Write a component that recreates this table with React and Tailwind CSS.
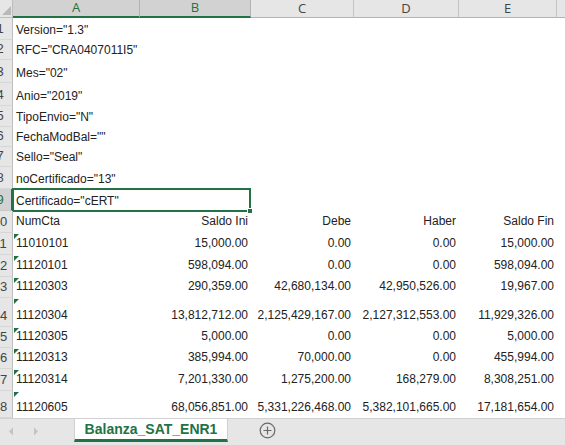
import React from "react"

// anchos de columna (px) y alto de filas
const COLS = [
  { key: "A", w: "w-[127px]", sel: true },
  { key: "B", w: "w-[111px]", sel: true },
  { key: "C", w: "w-[103px]" },
  { key: "D", w: "w-[105px]" },
  { key: "E", w: "w-[98px]" },
]

const HEAD = [
  { n: 1, h: "h-[22px]", pb: "pb-[3px]", a: 'Version="1.3"' },
  { n: 2, h: "h-[20px]", pb: "pb-[3px]", a: 'RFC="CRA0407011I5"' },
  { n: 3, h: "h-[23px]", pb: "pb-[3px]", a: 'Mes="02"' },
  { n: 4, h: "h-[23px]", pb: "pb-[3px]", a: 'Anio="2019"' },
  { n: 5, h: "h-[21px]", pb: "pb-[3px]", a: 'TipoEnvio="N"' },
  { n: 6, h: "h-[20px]", pb: "pb-[3px]", a: 'FechaModBal=""' },
  { n: 7, h: "h-[20px]", pb: "pb-[3px]", a: 'Sello="Seal"' },
  { n: 8, h: "h-[22px]", pb: "pb-[3px]", a: 'noCertificado="13"' },
  { n: 9, h: "h-[22px]", pb: "pb-[3px]", a: 'Certificado="cERT"', sel: true },
  { n: 10, h: "h-[22px]", pb: "pb-[5px]", a: "NumCta", vals: ["Saldo Ini", "Debe", "Haber", "Saldo Fin"] },
]

const DATA = [
  { n: 11, h: "h-[22px]", a: "11010101", vals: ["15,000.00", "0.00", "0.00", "15,000.00"] },
  { n: 12, h: "h-[22px]", a: "11120101", vals: ["598,094.00", "0.00", "0.00", "598,094.00"] },
  { n: 13, h: "h-[21px]", a: "11120303", vals: ["290,359.00", "42,680,134.00", "42,950,526.00", "19,967.00"] },
  { n: 14, h: "h-[29px]", a: "11120304", vals: ["13,812,712.00", "2,125,429,167.00", "2,127,312,553.00", "11,929,326.00"] },
  { n: 15, h: "h-[21px]", a: "11120305", vals: ["5,000.00", "0.00", "0.00", "5,000.00"] },
  { n: 16, h: "h-[21px]", a: "11120313", vals: ["385,994.00", "70,000.00", "0.00", "455,994.00"] },
  { n: 17, h: "h-[22px]", a: "11120314", vals: ["7,201,330.00", "1,275,200.00", "168,279.00", "8,308,251.00"] },
  { n: 18, h: "h-[27px]", pb: "pb-[4px]", a: "11120605", vals: ["68,056,851.00", "5,331,226,468.00", "5,382,101,665.00", "17,181,654.00"] },
]

function RowHeader({ n, sel }) {
  return (
    <div
      className={
        "relative w-[13px] shrink-0 overflow-hidden border-b border-r " +
        (sel
          ? "bg-[#d2d2d2] border-b-[#c8c8c8] border-r-2 border-r-[#217346] text-[#217346]"
          : "bg-[#e6e6e6] border-b-[#d6d6d6] border-r-[#bdbdbd] text-[#444]")
      }
    >
      <div className="absolute left-[-12px] bottom-[2px] w-[24px] text-center text-[13px] leading-[16px]">
        {n}
      </div>
    </div>
  )
}

function Row({ r, flag }) {
  const pb = r.pb || "pb-[5px]"
  return (
    <div className={"relative flex " + r.h}>
      <RowHeader n={r.n} sel={r.sel} />
      <div className={"relative w-[127px] shrink-0 flex items-end pl-[3px] whitespace-nowrap " + pb}>
        {flag && (
          <div className="absolute left-[1px] top-[1px] w-0 h-0 border-t-[5px] border-t-[#1e7145] border-r-[5px] border-r-transparent" />
        )}
        <span className="leading-[14px]">{r.a}</span>
      </div>
      {COLS.slice(1).map((c, i) => (
        <div key={c.key} className={c.w + " shrink-0 flex items-end justify-end pr-[3px] whitespace-nowrap " + pb}>
          <span className="leading-[14px]">{r.vals ? r.vals[i] : ""}</span>
        </div>
      ))}
      <div className="flex-1" />
      {r.sel && (
        <div className="absolute left-[12px] top-[-1px] w-[239px] h-[24px] border-2 border-[#217346]">
          <div className="absolute right-[-4px] bottom-[-4px] w-[6px] h-[6px] bg-[#217346] border border-white" />
        </div>
      )}
    </div>
  )
}

export default function App() {
  return (
    <div
      className="w-[565px] h-[445px] overflow-hidden bg-white flex flex-col text-[12px] text-[#222]"
      style={{ fontFamily: '"Liberation Sans", Arial, sans-serif' }}
    >
      {/* encabezado de columnas */}
      <div className="flex h-[18px] shrink-0">
        <div className="relative w-[13px] shrink-0 bg-[#e6e6e6] border-r border-b border-[#bdbdbd]">
          <div className="absolute right-[1px] bottom-[2px] w-0 h-0 border-b-[9px] border-b-[#b8b8b8] border-l-[9px] border-l-transparent" />
        </div>
        {COLS.map(c => (
          <div
            key={c.key}
            className={
              c.w +
              " shrink-0 flex items-center justify-center text-[13px] border-r " +
              (c.sel
                ? "bg-[#d2d2d2] text-[#217346] border-r-[#b4b4b4] border-b-2 border-b-[#217346]"
                : "bg-[#e6e6e6] text-[#444] border-r-[#c4c4c4] border-b border-b-[#b4b4b4]")
            }
            style={{ fontFamily: '"Open Sans", "Liberation Sans", sans-serif' }}
          >
            {c.key}
          </div>
        ))}
        <div className="flex-1 bg-[#e6e6e6] border-b border-[#b4b4b4]" />
      </div>

      {/* filas */}
      <div className="flex flex-col">
        {HEAD.map(r => <Row key={r.n} r={r} />)}
        {DATA.map(r => <Row key={r.n} r={r} flag />)}
      </div>

      {/* barra de hojas */}
      <div className="flex-1 flex bg-[#e6e6e6] border-t border-[#d0d0d0]">
        <div className="w-[74px] shrink-0 flex items-center pl-[8px] gap-[19px] pb-[2px]">
          <svg width="6" height="9" viewBox="0 0 6 9"><path d="M5 0.5 L1 4.5 L5 8.5 Z" fill="#c3c3c3" /></svg>
          <svg width="6" height="9" viewBox="0 0 6 9"><path d="M1 0.5 L5 4.5 L1 8.5 Z" fill="#c3c3c3" /></svg>
        </div>
        <div className="w-[154px] shrink-0 h-[23px] bg-white border-x border-[#d0d0d0] border-b-[3px] border-b-[#217346] flex items-center justify-center">
          <span className="text-[14px] font-bold text-[#217346] leading-none">Balanza_SAT_ENR1</span>
        </div>
        <div className="pl-[31px] flex items-center pb-[3px]">
          <svg width="17" height="17" viewBox="0 0 17 17">
            <circle cx="8.5" cy="8.5" r="7.3" fill="none" stroke="#6a6a6a" strokeWidth="1.2" />
            <path d="M8.5 4.5 V12.5 M4.5 8.5 H12.5" stroke="#6a6a6a" strokeWidth="1.2" />
          </svg>
        </div>
      </div>
    </div>
  )
}
